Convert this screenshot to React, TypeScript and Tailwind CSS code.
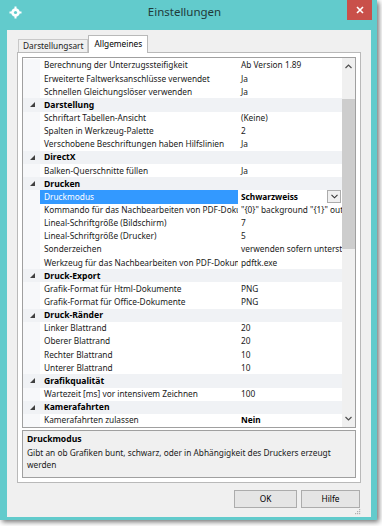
import React from 'react';

type Row =
  | { kind: 'cat'; name: string }
  | { kind: 'prop'; name: string; value: string; bold?: boolean; selected?: boolean; dropdown?: boolean };

const rows: Row[] = [
  { kind: 'prop', name: 'Berechnung der Unterzugssteifigkeit', value: 'Ab Version 1.89' },
  { kind: 'prop', name: 'Erweiterte Faltwerksanschlüsse verwendet', value: 'Ja' },
  { kind: 'prop', name: 'Schnellen Gleichungslöser verwenden', value: 'Ja' },
  { kind: 'cat', name: 'Darstellung' },
  { kind: 'prop', name: 'Schriftart Tabellen-Ansicht', value: '(Keine)' },
  { kind: 'prop', name: 'Spalten in Werkzeug-Palette', value: '2' },
  { kind: 'prop', name: 'Verschobene Beschriftungen haben Hilfslinien', value: 'Ja' },
  { kind: 'cat', name: 'DirectX' },
  { kind: 'prop', name: 'Balken-Querschnitte füllen', value: 'Ja' },
  { kind: 'cat', name: 'Drucken' },
  { kind: 'prop', name: 'Druckmodus', value: 'Schwarzweiss', bold: true, selected: true, dropdown: true },
  { kind: 'prop', name: 'Kommando für das Nachbearbeiten von PDF-Dokumenten', value: '"{0}" background "{1}" output "{2}"' },
  { kind: 'prop', name: 'Lineal-Schriftgröße (Bildschirm)', value: '7' },
  { kind: 'prop', name: 'Lineal-Schriftgröße (Drucker)', value: '5' },
  { kind: 'prop', name: 'Sonderzeichen', value: 'verwenden sofern unterstützt' },
  { kind: 'prop', name: 'Werkzeug für das Nachbearbeiten von PDF-Dokumenten', value: 'pdftk.exe' },
  { kind: 'cat', name: 'Druck-Export' },
  { kind: 'prop', name: 'Grafik-Format für Html-Dokumente', value: 'PNG' },
  { kind: 'prop', name: 'Grafik-Format für Office-Dokumente', value: 'PNG' },
  { kind: 'cat', name: 'Druck-Ränder' },
  { kind: 'prop', name: 'Linker Blattrand', value: '20' },
  { kind: 'prop', name: 'Oberer Blattrand', value: '20' },
  { kind: 'prop', name: 'Rechter Blattrand', value: '10' },
  { kind: 'prop', name: 'Unterer Blattrand', value: '10' },
  { kind: 'cat', name: 'Grafikqualität' },
  { kind: 'prop', name: 'Wartezeit [ms] vor intensivem Zeichnen', value: '100' },
  { kind: 'cat', name: 'Kamerafahrten' },
  { kind: 'prop', name: 'Kamerafahrten zulassen', value: 'Nein', bold: true },
];

function GridRow({ row }: { row: Row }) {
  if (row.kind === 'cat') {
    return (
      <div className="flex h-[13.15px] items-center bg-[#f0f2f5]">
        <div className="flex w-[17px] shrink-0 justify-center pl-[2px]">
          <svg width="5" height="5" viewBox="0 0 5 5">
            <polygon points="5,0 5,5 0,5" fill="#404040" />
          </svg>
        </div>
        <div className="pl-[4px] text-[8.6px] font-bold text-black">{row.name}</div>
      </div>
    );
  }
  return (
    <div className="flex h-[13.15px] items-center bg-white">
      <div className="h-full w-[17px] shrink-0 bg-[#f7f8fa]" />
      <div
        className={`flex h-full w-[198px] shrink-0 items-center overflow-hidden whitespace-nowrap pl-[4px] ${
          row.selected ? 'bg-[#3399ff] text-white' : 'text-[#1a1a1a]'
        }`}
      >
        {row.name}
      </div>
      <div className="relative flex h-full min-w-0 flex-1 items-center overflow-hidden whitespace-nowrap pl-[3px]">
        <span className={row.bold ? 'font-bold text-black' : 'text-[#1a1a1a]'}>{row.value}</span>
        {row.dropdown && (
          <div className="absolute right-[1px] top-[0px] flex h-[13px] w-[14px] items-center justify-center border border-[#acacac] bg-[#f0f0f0]">
            <svg width="7" height="5" viewBox="0 0 7 5">
              <polyline points="0.5,0.8 3.5,3.8 6.5,0.8" fill="none" stroke="#333" strokeWidth="1.1" />
            </svg>
          </div>
        )}
      </div>
    </div>
  );
}

export default function App() {
  return (
    <div
      className="h-[526px] w-[382px] bg-white text-[8.3px] leading-none"
      style={{ fontFamily: '"Noto Sans", "Open Sans", sans-serif' }}
    >
      <div className="flex h-[520px] w-[377px] flex-col bg-[#62cbcc] shadow-[2px_2px_5px_rgba(0,0,0,0.55)]">
        {/* title bar */}
        <div className="relative flex h-[30px] shrink-0 items-start">
          <div className="ml-[9px] mt-[6px]">
            <svg width="13" height="13" viewBox="0 0 13 13">
              <circle cx="6.5" cy="6.5" r="4.3" fill="white" />
              <circle cx="6.5" cy="6.5" r="1.6" fill="#62cbcc" />
              <rect x="5.5" y="0.5" width="2" height="2.5" fill="white" />
              <rect x="5.5" y="10" width="2" height="2.5" fill="white" />
              <rect x="0.5" y="5.5" width="2.5" height="2" fill="white" />
              <rect x="10" y="5.5" width="2.5" height="2" fill="white" />
            </svg>
          </div>
          <div className="flex-1 pt-[6px] text-center text-[11.5px] text-[#1f3a3a]">Einstellungen</div>
          <div className="mr-[5px] flex h-[20px] w-[25px] items-center justify-center bg-[#c9504a]">
            <svg width="8" height="8" viewBox="0 0 8 8">
              <path d="M1 1 L7 7 M7 1 L1 7" stroke="white" strokeWidth="1.6" />
            </svg>
          </div>
        </div>
        {/* client area */}
        <div className="mb-[7px] ml-[7px] mr-[6px] flex flex-1 flex-col bg-[#f0f0f0] px-[10px] pt-[5px]">
          {/* tabs */}
          <div className="flex h-[17px] items-end pl-[1px]">
            <div className="flex h-[13px] items-center border border-b-0 border-[#c8c8c8] bg-[#f0f0f0] px-[4px] text-[#1a1a1a]">
              Darstellungsart
            </div>
            <div className="relative z-10 -mb-[1px] flex h-[18px] items-center border border-b-0 border-[#b9b9b9] bg-white px-[5px] text-black">
              Allgemeines
            </div>
          </div>
          <div className="flex h-[431px] flex-col border border-[#b9b9b9] bg-white px-[4px] pb-[4px] pt-[4px]">
            {/* property grid */}
            <div className="flex h-[371px] border border-[#a0a0a0]">
              <div className="flex min-w-0 flex-1 flex-col pt-[1px]">
                {rows.map((r, i) => (
                  <GridRow key={i} row={r} />
                ))}
              </div>
              <div className="flex w-[13px] flex-col items-center bg-[#f0f0f0]">
                <div className="flex h-[14px] items-center justify-center pt-[3px]">
                  <svg width="7" height="5" viewBox="0 0 7 5">
                    <polyline points="0.5,4 3.5,1 6.5,4" fill="none" stroke="#505050" strokeWidth="1.2" />
                  </svg>
                </div>
                <div className="mt-[27px] h-[150px] w-[13px] bg-[#cdcdcd]" />
                <div className="flex-1" />
                <div className="flex h-[14px] items-center justify-center pb-[3px]">
                  <svg width="7" height="5" viewBox="0 0 7 5">
                    <polyline points="0.5,1 3.5,4 6.5,1" fill="none" stroke="#505050" strokeWidth="1.2" />
                  </svg>
                </div>
              </div>
            </div>
            {/* description */}
            <div className="mt-[2px] flex-1 border border-[#a0a0a0] bg-[#f0f0f0] px-[4px] pt-[4px] text-[#1a1a1a]">
              <div className="text-[8.6px] font-bold text-black">Druckmodus</div>
              <div className="mt-[3px] leading-[12px]">
                Gibt an ob Grafiken bunt, schwarz, oder in Abhängigkeit des Druckers erzeugt werden
              </div>
            </div>
          </div>
          {/* buttons */}
          <div className="mt-[7px] flex justify-end gap-[4px] pr-[1px]">
            <div className="flex h-[18px] w-[63px] items-center justify-center border border-[#acacac] bg-[#e5e5e5] text-black">
              OK
            </div>
            <div className="flex h-[18px] w-[59px] items-center justify-center border border-[#acacac] bg-[#e5e5e5] text-black">
              Hilfe
            </div>
          </div>
          <div className="flex flex-1 items-end justify-end pb-[2px]">
            <svg width="7" height="7" viewBox="0 0 7 7">
              <rect x="5" y="1" width="1.2" height="1.2" fill="#b0b0b0" />
              <rect x="3" y="3" width="1.2" height="1.2" fill="#b0b0b0" />
              <rect x="5" y="3" width="1.2" height="1.2" fill="#b0b0b0" />
              <rect x="1" y="5" width="1.2" height="1.2" fill="#b0b0b0" />
              <rect x="3" y="5" width="1.2" height="1.2" fill="#b0b0b0" />
              <rect x="5" y="5" width="1.2" height="1.2" fill="#b0b0b0" />
            </svg>
          </div>
        </div>
      </div>
    </div>
  );
}
